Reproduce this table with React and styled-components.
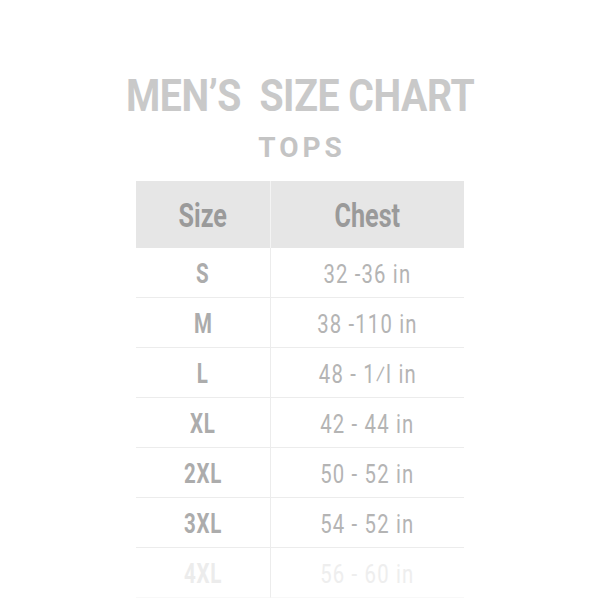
import React from "react";
import styled, { createGlobalStyle } from "styled-components";

const GlobalStyle = createGlobalStyle`
  html, body {
    margin: 0;
    padding: 0;
    background: #ffffff;
  }
`;

const sizes = [
  { size: "S", chest: "32 -36 in" },
  { size: "M", chest: "38 -110 in" },
  { size: "L", chest: "48 - 1⁄l in" },
  { size: "XL", chest: "42 - 44 in" },
  { size: "2XL", chest: "50 - 52 in" },
  { size: "3XL", chest: "54 - 52 in" },
  { size: "4XL", chest: "56 - 60 in", faded: true },
];

const App = () => {
  return (
    <>
      <GlobalStyle />
      <Page>
        <Title>MEN’S&nbsp; SIZE CHART</Title>
        <Subtitle>TOPS</Subtitle>
        <Table>
          <HeadCell>
            <HeadText>Size</HeadText>
          </HeadCell>
          <HeadCell>
            <HeadText>Chest</HeadText>
          </HeadCell>
          {sizes.map((row) => (
            <React.Fragment key={row.size}>
              <SizeCell $faded={row.faded}>
                <SizeText>{row.size}</SizeText>
              </SizeCell>
              <ChestCell $faded={row.faded}>
                <ChestText>{row.chest}</ChestText>
              </ChestCell>
            </React.Fragment>
          ))}
        </Table>
      </Page>
    </>
  );
};

const Page = styled.div`
  width: 600px;
  height: 600px;
  overflow: hidden;
  display: flex;
  flex-direction: column;
  align-items: center;
  padding-top: 72px;
  box-sizing: border-box;
  font-family: "Roboto", sans-serif;
`;

const Title = styled.h1`
  margin: 0;
  font-weight: 700;
  font-size: 45px;
  line-height: 48px;
  color: #c9c9c9;
  letter-spacing: -0.5px;
  white-space: nowrap;
  transform: scaleX(0.87);
`;

const Subtitle = styled.h2`
  margin: 12px 0 0 4px;
  font-weight: 700;
  font-size: 28px;
  line-height: 32px;
  letter-spacing: 4px;
  color: #c4c4c4;
`;

const Table = styled.div`
  margin-top: 17px;
  width: 328px;
  display: grid;
  grid-template-columns: 135px 1fr;
`;

const HeadCell = styled.div`
  height: 67px;
  background: #e6e6e6;
  display: flex;
  align-items: center;
  justify-content: center;
  &:first-child {
    border-right: 1px solid #f4f4f4;
  }
`;

const HeadText = styled.span`
  display: inline-block;
  font-weight: 700;
  font-size: 34px;
  color: #9a9a9a;
  transform: scaleX(0.74);
`;

const Cell = styled.div`
  height: 50px;
  padding-top: 3px;
  display: flex;
  align-items: center;
  justify-content: center;
  border-bottom: 1px solid ${(p) => (p.$faded ? "#f8f8f8" : "#ececec")};
  box-sizing: border-box;
  white-space: nowrap;
`;

const SizeCell = styled(Cell)`
  border-right: 1px solid #ececec;
  color: ${(p) => (p.$faded ? "#ececec" : "#acacac")};
`;

const ChestCell = styled(Cell)`
  color: ${(p) => (p.$faded ? "#eeeeee" : "#b4b4b4")};
`;

const SizeText = styled.span`
  display: inline-block;
  font-weight: 700;
  font-size: 27px;
  letter-spacing: 1px;
  transform: scaleX(0.76);
`;

const ChestText = styled.span`
  display: inline-block;
  font-weight: 400;
  font-size: 26px;
  letter-spacing: 1.5px;
  transform: scaleX(0.78);
`;

export default App;
